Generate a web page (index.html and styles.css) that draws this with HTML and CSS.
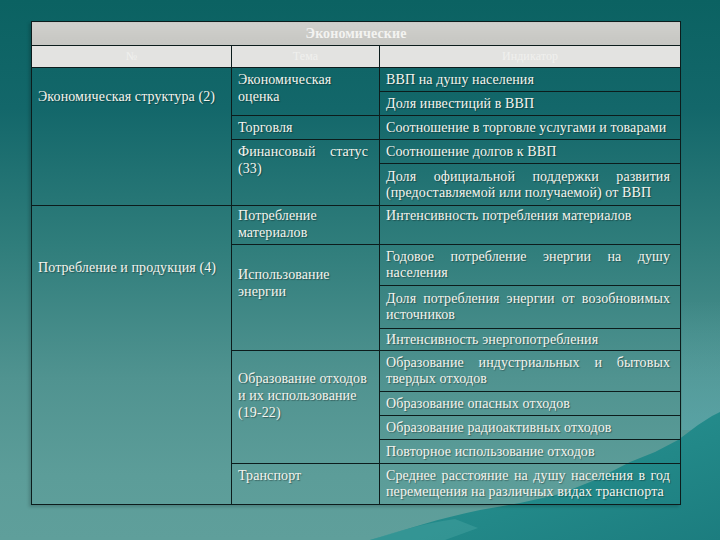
FILE: index.html
```html
<!DOCTYPE html>
<html lang="ru">
<head>
<meta charset="utf-8">
<title>Экономические индикаторы</title>
<link rel="stylesheet" href="styles.css">
</head>
<body>
<svg class="mountain" width="720" height="540" viewBox="0 0 720 540" aria-hidden="true">
  <defs>
    <linearGradient id="mg" x1="0" y1="0" x2="1" y2="1">
      <stop offset="0" stop-color="#2a9797"/>
      <stop offset="0.6" stop-color="#228888"/>
      <stop offset="1" stop-color="#1c7d7f"/>
    </linearGradient>
    <linearGradient id="glow" x1="0" y1="0" x2="0" y2="1">
      <stop offset="0" stop-color="#5aa6a8" stop-opacity="0"/>
      <stop offset="1" stop-color="#5aa6aa" stop-opacity="0.7"/>
    </linearGradient>
  </defs>
  <rect x="682" y="300" width="38" height="130" fill="url(#glow)"/>
  <path d="M 370 540 C 405 530, 440 518, 480 510 L 520 503 L 560 494 L 595 480 L 630 462 L 655 452 L 678 440 L 698 425 L 712 416 L 720 412 L 720 540 Z" fill="url(#mg)"/>
  <path d="M 370 540 C 398 531, 425 523, 455 519 L 478 528 L 445 540 Z" fill="#3f9d9b" opacity="0.6"/>
</svg>
<main class="slide">
  <table class="grid">
    <colgroup>
      <col class="c1"><col class="c2"><col class="c3">
    </colgroup>
    <thead>
      <tr class="h24"><th colspan="3" class="title">Экономические</th></tr>
      <tr class="h22"><th class="sub">№</th><th class="sub">Тема</th><th class="sub">Индикатор</th></tr>
    </thead>
    <tbody>
      <tr class="h24">
        <td rowspan="5" class="group g1">Экономическая структура (2)</td>
        <td rowspan="2" class="theme">Экономическая оценка</td>
        <td class="ind">ВВП на душу населения</td>
      </tr>
      <tr class="h24"><td class="ind">Доля инвестиций в ВВП</td></tr>
      <tr class="h24"><td class="theme">Торговля</td><td class="ind">Соотношение в торговле услугами и товарами</td></tr>
      <tr class="h24"><td rowspan="2" class="theme just">Финансовый статус (33)</td><td class="ind">Соотношение долгов к ВВП</td></tr>
      <tr class="h42"><td class="ind">Доля официальной поддержки развития (предоставляемой или получаемой) от ВВП</td></tr>
      <tr class="h39">
        <td rowspan="10" class="group g2">Потребление и продукция (4)</td>
        <td class="theme tight">Потребление материалов</td>
        <td class="ind top">Интенсивность потребления материалов</td>
      </tr>
      <tr class="h41"><td rowspan="3" class="theme energy">Использование энергии</td><td class="ind">Годовое потребление энергии на душу населения</td></tr>
      <tr class="h43"><td class="ind">Доля потребления энергии от возобновимых источников</td></tr>
      <tr class="h22"><td class="ind">Интенсивность энергопотребления</td></tr>
      <tr class="h41"><td rowspan="4" class="theme waste">Образование отходов и их использование (19-22)</td><td class="ind">Образование индустриальных и бытовых твердых отходов</td></tr>
      <tr class="h24"><td class="ind">Образование опасных отходов</td></tr>
      <tr class="h24"><td class="ind">Образование радиоактивных отходов</td></tr>
      <tr class="h24"><td class="ind">Повторное использование отходов</td></tr>
      <tr class="h41"><td class="theme">Транспорт</td><td class="ind">Среднее расстояние на душу населения в год перемещения на различных видах транспорта</td></tr>
    </tbody>
  </table>
</main>
</body>
</html>
```

FILE: styles.css
```css
html, body {
  margin: 0;
  padding: 0;
}

body {
  width: 720px;
  height: 540px;
  overflow: hidden;
  position: relative;
  font-family: "Liberation Serif", "DejaVu Serif", serif;
  font-size: 14px;
  letter-spacing: 0.1px;
  color: #f4f4ee;
  background: linear-gradient(180deg, #0b6262 0%, #13676a 20%, #2f7d7b 45%, #509390 70%, #5c9d99 88%, #5f9f9b 100%);
}

.mountain {
  position: absolute;
  left: 0;
  top: 0;
  z-index: 0;
}

.slide {
  position: relative;
  z-index: 1;
  padding: 21px 0 0 31px;
}

.grid {
  width: 649px;
  table-layout: fixed;
  border-collapse: collapse;
  box-shadow: -2px 2px 3px rgba(0, 0, 0, 0.18);
}

.c1 { width: 200px; }
.c2 { width: 148px; }
.c3 { width: 301px; }

.grid th,
.grid td {
  border: 1px solid #0c1c1c;
  padding: 0;
  text-shadow: 1px 1px 1px rgba(0, 0, 0, 0.35);
}

.grid .title {
  background: linear-gradient(180deg, #d0d0cc 0%, #c6c6c2 100%);
  color: #f3f3f1;
  font-weight: bold;
  font-size: 14px;
  text-shadow: none;
}

.grid .sub {
  background: #e3e3e1;
  color: #f0f0ee;
  font-weight: normal;
  font-size: 12px;
  text-shadow: none;
}

.h22 { height: 22px; }
.h23 { height: 23px; }
.h24 { height: 24px; }
.h39 { height: 39px; }
.h41 { height: 41px; }
.h42 { height: 42px; }
.h43 { height: 43px; }

.grid .group {
  vertical-align: top;
  padding: 0 6px;
  line-height: 17px;
}

.grid .g1 { padding-top: 20px; }
.grid .g2 { padding-top: 53px; }

.grid .theme {
  vertical-align: top;
  padding: 3px 11px 0 6px;
  line-height: 17px;
  text-align: left;
}

.grid .just { text-align: justify; }
.grid .tight { padding-top: 1px; }
.grid .energy { padding-top: 21px; }
.grid .waste { padding-top: 19px; }

.grid .ind {
  vertical-align: middle;
  padding: 0 10px 0 6px;
  line-height: 16px;
  text-align: justify;
}

.grid .top {
  vertical-align: top;
  padding-top: 2px;
}
```
